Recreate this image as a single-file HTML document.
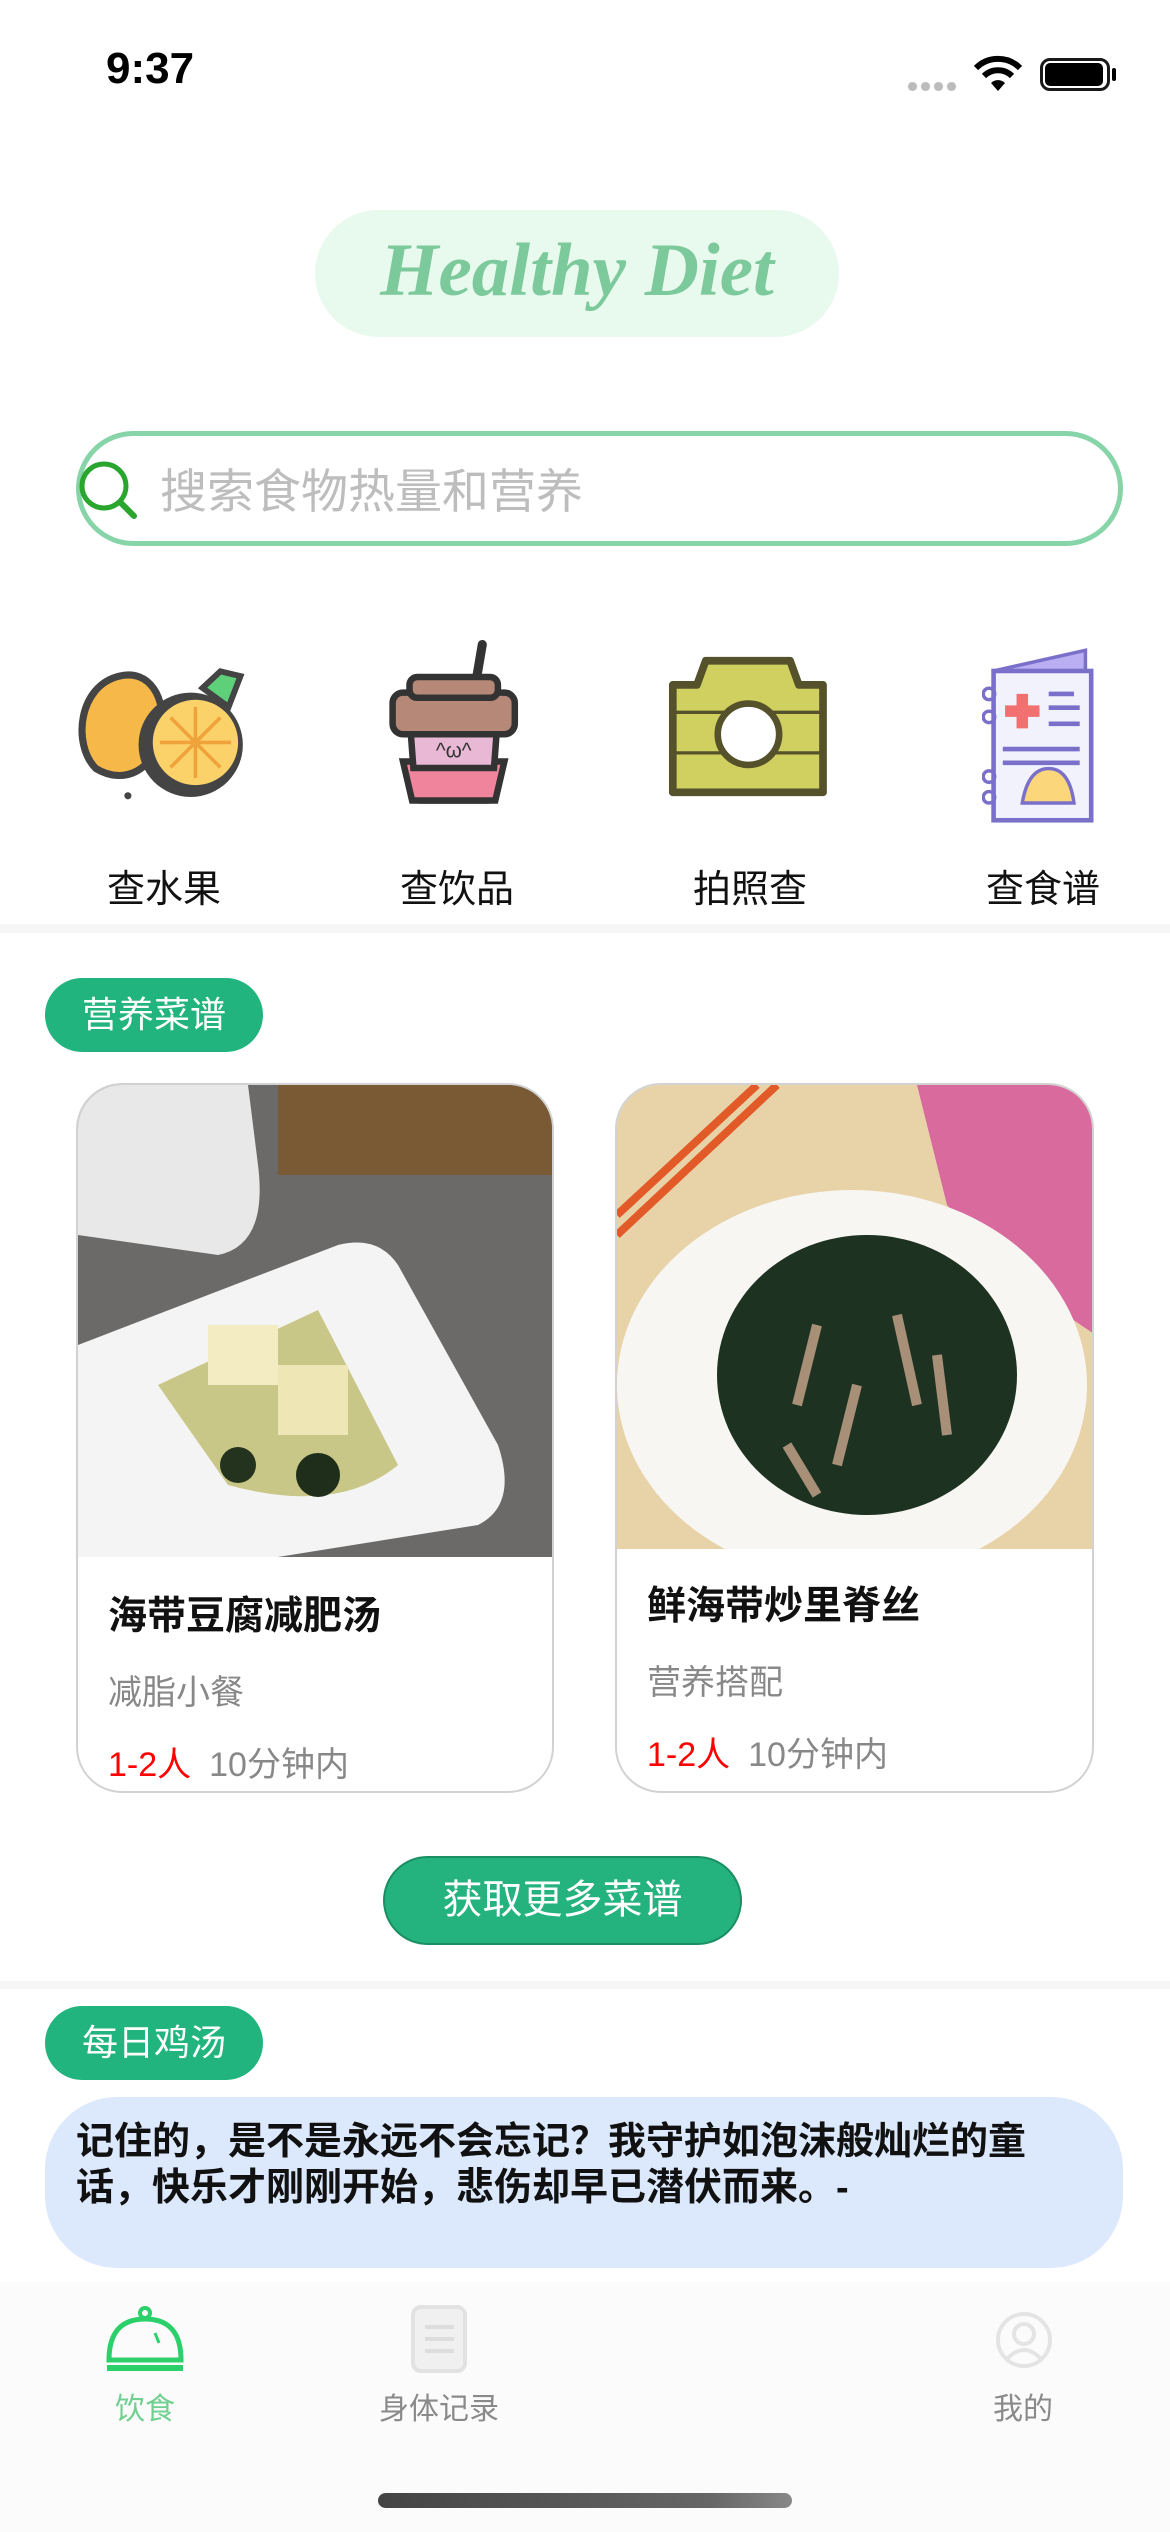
<!DOCTYPE html>
<html><head><meta charset="utf-8"><style>
*{margin:0;padding:0;box-sizing:border-box}
body{width:1170px;height:2532px;background:#fff;position:relative;overflow:hidden;font-family:"Liberation Sans","Noto Sans CJK SC",sans-serif}
.abs{position:absolute}
.tag{position:absolute;left:45px;width:218px;height:74px;border-radius:37px;background:#22b47e;color:#fff;font-size:36px;line-height:74px;text-align:center}
.card{position:absolute;top:1083px;height:710px;border:2px solid #d2d2d2;border-radius:46px;overflow:hidden;background:#fff}
.card h3{position:absolute;left:30px;font-size:39px;font-weight:bold;color:#111}
.card .sub{position:absolute;left:30px;font-size:34px;color:#888}
.card .meta{position:absolute;left:30px;font-size:34px;color:#888}
.card .meta b{font-weight:normal;color:#f00;margin-right:18px}
.lbl{position:absolute;top:858px;width:200px;text-align:center;font-size:38px;color:#111}
.tab{position:absolute;top:2384px;width:200px;text-align:center;font-size:30px;color:#8a8a8a}
</style></head><body>
<!-- status bar -->
<div class="abs" style="left:106px;top:44px;font-size:44px;font-weight:bold;color:#000">9:37</div>
<div class="abs" style="left:906px;top:82px;width:52px;height:9px;background:radial-gradient(circle,#bbb 4px,transparent 5px) 0 0/13px 9px"></div>
<svg class="abs" style="left:972px;top:55px" width="52" height="38" viewBox="0 0 52 38"><path d="M26 36 L19 28 A10 10 0 0 1 33 28 Z" fill="#000"/><path d="M12 21 A20 20 0 0 1 40 21" stroke="#000" stroke-width="6" fill="none"/><path d="M4 13 A31 31 0 0 1 48 13" stroke="#000" stroke-width="6" fill="none"/></svg>
<div class="abs" style="left:1040px;top:58px;width:70px;height:33px;border:3px solid #000;border-radius:10px;opacity:.9"></div>
<div class="abs" style="left:1045px;top:63px;width:58px;height:23px;background:#000;border-radius:5px"></div>
<div class="abs" style="left:1112px;top:68px;width:4px;height:13px;background:#000;border-radius:2px"></div>

<!-- title pill -->
<div class="abs" style="left:315px;top:210px;width:524px;height:127px;border-radius:64px;background:#e8f9ee"></div>
<div class="abs" style="left:315px;top:228px;width:524px;text-align:center;font-family:'Liberation Serif',serif;font-style:italic;font-weight:bold;font-size:75px;color:#7cc99b">Healthy Diet</div>

<!-- search -->
<div class="abs" style="left:76px;top:431px;width:1047px;height:115px;border:5px solid #86d4a8;border-radius:58px"></div>
<svg class="abs" style="left:76px;top:458px" width="64" height="64" viewBox="0 0 64 64"><circle cx="28" cy="28" r="22" stroke="#2aa52e" stroke-width="5" fill="none"/><path d="M45 45 L58 58" stroke="#2aa52e" stroke-width="6" stroke-linecap="round"/></svg>
<div class="abs" style="left:160px;top:453px;font-size:47px;color:#bdbdbd">搜索食物热量和营养</div>

<!-- icons -->
<svg class="abs" style="left:72px;top:650px" width="190" height="160" viewBox="0 0 160 135">
<path d="M20 100 C0 80 5 30 40 22 C65 16 80 40 75 70 C70 100 45 115 20 100Z" fill="#f7b84a" stroke="#444" stroke-width="6"/>
<path d="M110 32 L125 18 L142 22 L132 48Z" fill="#5fd07a" stroke="#444" stroke-width="5"/>
<circle cx="100" cy="80" r="44" fill="#444"/><circle cx="104" cy="78" r="36" fill="#fbd26a"/>
<g stroke="#f0a33a" stroke-width="3"><path d="M104 48 V108 M74 78 H134 M83 57 L125 99 M125 57 L83 99"/></g>
<circle cx="47" cy="123" r="3" fill="#444"/><circle cx="96" cy="118" r="3" fill="#444"/></svg>
<svg class="abs" style="left:383px;top:638px" width="170" height="221" viewBox="0 0 130 170">
<path d="M68 52 L76 5" stroke="#333" stroke-width="7" stroke-linecap="round"/>
<path d="M20 110 L28 125 H80 L88 110Z" fill="#e8b8d4" stroke="#333" stroke-width="5"/>
<path d="M15 95 L22 125 H86 L93 95Z" fill="#f0849c" stroke="#333" stroke-width="5"/>
<path d="M20 60 L23 100 H85 L88 60Z" fill="#e8b8d4" stroke="#333" stroke-width="5"/>
<rect x="7" y="42" width="94" height="32" rx="8" fill="#b68877" stroke="#333" stroke-width="5"/>
<rect x="20" y="30" width="68" height="16" rx="6" fill="#b68877" stroke="#333" stroke-width="5"/>
<text x="54" y="92" font-size="16" text-anchor="middle" fill="#333">^ω^</text></svg>
<svg class="abs" style="left:664px;top:652px" width="170" height="148" viewBox="0 0 155 135">
<path d="M8 30 H30 L38 8 H115 L123 30 H145 V128 H8Z" fill="#cfd060" stroke="#55512a" stroke-width="7" stroke-linejoin="round"/>
<g stroke="#55512a" stroke-width="3"><path d="M8 55 H145 M8 92 H145"/></g>
<circle cx="77" cy="75" r="28" fill="#fff" stroke="#55512a" stroke-width="6"/></svg>
<svg class="abs" style="left:982px;top:648px" width="138" height="178" viewBox="0 0 120 155">
<path d="M10 20 L90 2 V25Z" fill="#b9aff2" stroke="#7b70c9" stroke-width="3"/>
<rect x="10" y="20" width="85" height="130" fill="#f2f2fd" stroke="#7b70c9" stroke-width="4"/>
<path d="M35 40 V70 M20 55 H50" stroke="#f27070" stroke-width="10"/>
<g stroke="#7b70c9" stroke-width="4"><path d="M58 40 H80 M58 52 H85 M58 66 H85 M18 88 H85 M18 100 H85"/></g>
<path d="M35 135 Q40 105 58 105 Q76 105 80 135Z" fill="#fbd67a" stroke="#7b70c9" stroke-width="3"/>
<circle cx="6" cy="40" r="5" fill="none" stroke="#7b70c9" stroke-width="3"/><circle cx="6" cy="60" r="5" fill="none" stroke="#7b70c9" stroke-width="3"/><circle cx="6" cy="112" r="5" fill="none" stroke="#7b70c9" stroke-width="3"/><circle cx="6" cy="130" r="5" fill="none" stroke="#7b70c9" stroke-width="3"/></svg>
<div class="lbl" style="left:64px">查水果</div>
<div class="lbl" style="left:357px">查饮品</div>
<div class="lbl" style="left:650px">拍照查</div>
<div class="lbl" style="left:943px">查食谱</div>
<div class="abs" style="left:0;top:924px;width:1170px;height:9px;background:#f6f6f6"></div>

<div class="tag" style="top:978px">营养菜谱</div>
<div class="card" style="left:76px;width:478px">
<svg class="abs" style="left:0;top:0" width="478" height="472" viewBox="0 0 478 472">
<rect width="478" height="472" fill="#6b6a68"/>
<rect x="200" y="0" width="278" height="90" fill="#7a5a35"/>
<path d="M0 0 H170 L180 80 Q190 160 140 170 L0 150Z" fill="#e8e8e8"/>
<path d="M0 260 L260 160 Q300 150 320 180 L420 360 Q440 420 400 440 L200 472 H0Z" fill="#f4f4f4"/>
<path d="M80 300 L240 225 L320 380 Q260 430 150 400Z" fill="#c9c787"/>
<rect x="130" y="240" width="70" height="60" fill="#f3ecc2"/><rect x="200" y="280" width="70" height="70" fill="#efe6b5"/>
<circle cx="160" cy="380" r="18" fill="#23331d"/><circle cx="240" cy="390" r="22" fill="#1f2e1a"/>
</svg>
<h3 style="top:500px">海带豆腐减肥汤</h3>
<div class="sub" style="top:580px">减脂小餐</div>
<div class="meta" style="top:652px"><b>1-2人</b>10分钟内</div>
</div>
<div class="card" style="left:615px;width:479px">
<svg class="abs" style="left:0;top:0" width="479" height="464" viewBox="0 0 479 464">
<rect width="479" height="464" fill="#e8d3a8"/>
<path d="M300 0 H479 V250 Q400 200 330 120Z" fill="#d86a9e"/>
<path d="M0 130 L140 0 M0 150 L160 0" stroke="#e25a28" stroke-width="8"/>
<ellipse cx="235" cy="300" rx="235" ry="195" fill="#f8f6f2"/>
<ellipse cx="250" cy="290" rx="150" ry="140" fill="#1e3222"/>
<g stroke="#a89078" stroke-width="10"><path d="M200 240 L180 320 M280 230 L300 320 M240 300 L220 380 M320 270 L330 350 M170 360 L200 410"/></g>
</svg>
<h3 style="top:490px">鲜海带炒里脊丝</h3>
<div class="sub" style="top:570px">营养搭配</div>
<div class="meta" style="top:642px"><b>1-2人</b>10分钟内</div>
</div>

<div class="abs" style="left:383px;top:1856px;width:359px;height:89px;border-radius:45px;background:#24b27f;border:2px solid #1a8f63;color:#fff;font-size:40px;line-height:85px;text-align:center">获取更多菜谱</div>
<div class="abs" style="left:0;top:1981px;width:1170px;height:8px;background:#f6f6f6"></div>

<div class="tag" style="top:2006px">每日鸡汤</div>
<div class="abs" style="left:45px;top:2097px;width:1078px;height:171px;border-radius:72px;background:#dce9fd"></div>
<div class="abs" style="left:76px;top:2119px;width:990px;font-size:38px;font-weight:bold;line-height:46px;color:#111">记住的，是不是永远不会忘记？我守护如泡沫般灿烂的童话，快乐才刚刚开始，悲伤却早已潜伏而来。-</div>

<!-- tab bar -->
<div class="abs" style="left:0;top:2282px;width:1170px;height:250px;background:#fbfbfb"></div>
<svg class="abs" style="left:105px;top:2305px" width="80" height="72" viewBox="0 0 80 72">
<circle cx="40" cy="8" r="5" fill="none" stroke="#2cd06a" stroke-width="4"/>
<path d="M4 55 Q4 14 40 14 Q76 14 76 55Z" fill="none" stroke="#2cd06a" stroke-width="5"/>
<path d="M2 63 H78" stroke="#2cd06a" stroke-width="6"/><path d="M50 28 L54 38" stroke="#2cd06a" stroke-width="3"/></svg>
<svg class="abs" style="left:410px;top:2303px" width="60" height="72" viewBox="0 0 60 72">
<rect x="3" y="4" width="52" height="64" rx="8" fill="#f0f0f0" stroke="#e2e2e2" stroke-width="4"/>
<g stroke="#ddd" stroke-width="4"><path d="M15 24 H44 M15 36 H44 M15 48 H44"/></g></svg>
<svg class="abs" style="left:994px;top:2310px" width="60" height="64" viewBox="0 0 60 64">
<circle cx="30" cy="30" r="26" fill="none" stroke="#e4e4e4" stroke-width="4"/>
<circle cx="30" cy="24" r="10" fill="none" stroke="#e4e4e4" stroke-width="4"/>
<path d="M12 50 Q30 30 48 50" fill="none" stroke="#e4e4e4" stroke-width="4"/></svg>
<div class="tab" style="left:45px;color:#6fd08f">饮食</div>
<div class="tab" style="left:339px">身体记录</div>
<div class="tab" style="left:923px">我的</div>
<div class="abs" style="left:378px;top:2493px;width:414px;height:15px;border-radius:8px;background:linear-gradient(90deg,#444,#666 80%,#888)"></div>
</body></html>
